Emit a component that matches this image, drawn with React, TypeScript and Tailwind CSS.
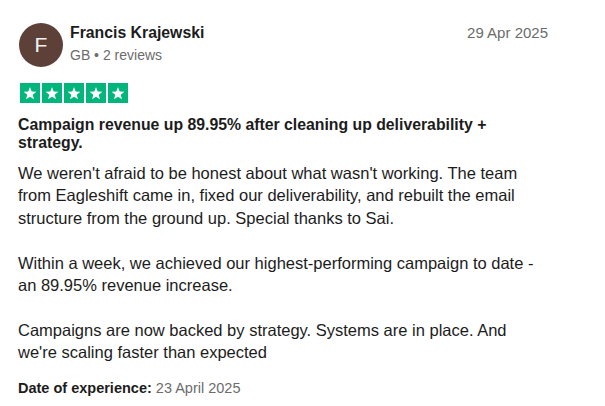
const review = {
  name: "Francis Krajewski",
  initial: "F",
  country: "GB",
  reviews: 2,
  date: "29 Apr 2025",
  rating: 5,
  title: "Campaign revenue up 89.95% after cleaning up deliverability + strategy.",
  body: "We weren't afraid to be honest about what wasn't working. The team from Eagleshift came in, fixed our deliverability, and rebuilt the email structure from the ground up. Special thanks to Sai.\n\nWithin a week, we achieved our highest-performing campaign to date - an 89.95% revenue increase.\n\nCampaigns are now backed by strategy. Systems are in place. And we're scaling faster than expected",
  experience: "23 April 2025",
};

function Star() {
  return (
    <svg viewBox="0 0 24 24" className="h-[14px] w-[14px]" fill="white">
      <path d="M12 1.8l2.9 7.6 8.1.4-6.3 5.1 2.1 7.9L12 18.3l-6.8 4.5 2.1-7.9L1 9.8l8.1-.4z" />
    </svg>
  );
}

function Stars({ count }: { count: number }) {
  return (
    <div className="ml-[2px] flex gap-[2px]">
      {[0, 1, 2, 3, 4].map((i) => (
        <span
          key={i}
          className={
            i < count
              ? "flex h-5 w-5 items-center justify-center bg-[#00b67a]"
              : "flex h-5 w-5 items-center justify-center bg-[#dcdce6]"
          }
        >
          <Star />
        </span>
      ))}
    </div>
  );
}

export default function App() {
  return (
    <div className="min-h-screen bg-white font-['Liberation_Sans',Arial,sans-serif] text-[#1c1c1c]">
      <article className="pl-[18px] pr-[57px] pt-[23px]">
        <header className="flex items-start">
          <div className="ml-[1px] flex h-11 w-11 shrink-0 items-center justify-center rounded-full bg-[#5d4037] text-[21px] text-[#f2f2f2]">
            {review.initial}
          </div>
          <div className="ml-[7px] flex flex-col">
            <span className="text-[15.8px] font-bold leading-[20px]">{review.name}</span>
            <span className="mt-[2px] text-[14px] leading-[20px] text-[#6c6c6c]">
              {review.country} • {review.reviews} reviews
            </span>
          </div>
          <span className="ml-auto text-[15px] leading-[20px] text-[#6c6c6c]">{review.date}</span>
        </header>

        <div className="mt-4">
          <Stars count={review.rating} />
        </div>

        <div className="max-w-[522px]">
          <h2 className="mt-[13px] text-[15.8px] font-bold leading-[18px]">{review.title}</h2>

          <p className="mt-[10px] whitespace-pre-line text-[16.5px] leading-[22.4px]">{review.body}</p>

          <p className="mt-[14px] text-[14.5px] leading-[20px]">
            <span className="font-bold">Date of experience:</span>{" "}
            <span className="text-[#6c6c6c]">{review.experience}</span>
          </p>
        </div>
      </article>
    </div>
  );
}
